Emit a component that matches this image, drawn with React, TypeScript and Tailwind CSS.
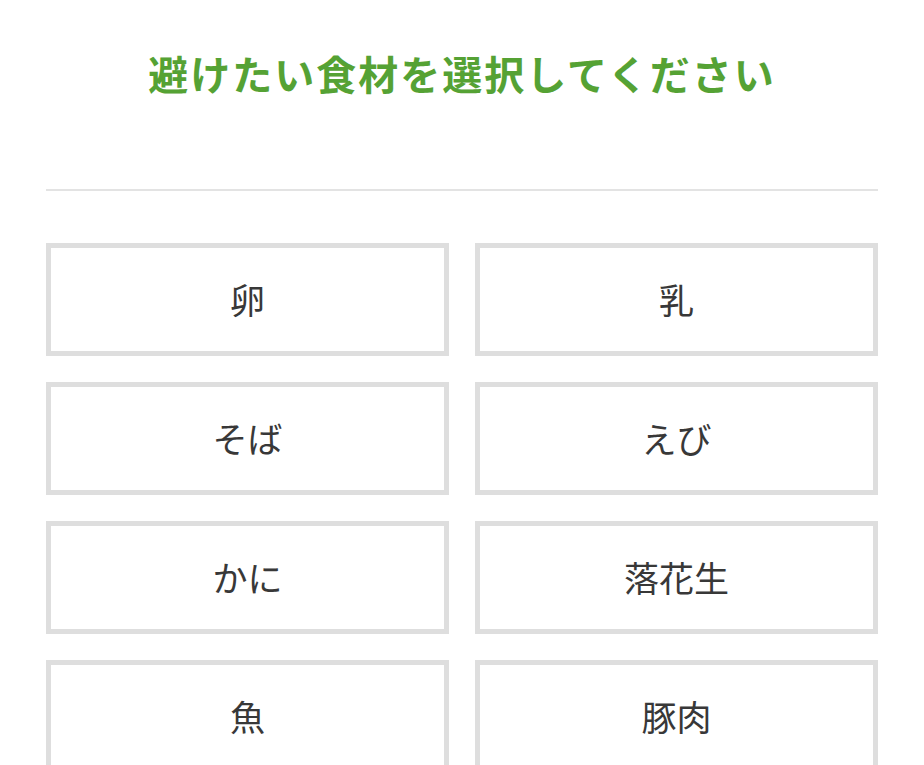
export default function App() {
  const items = ['卵', '乳', 'そば', 'えび', 'かに', '落花生', '魚', '豚肉'];

  return (
    <div className="min-h-screen bg-white font-['Noto_Sans_CJK_JP',sans-serif]">
      <div className="mx-[46px]">
        <h1 className="pt-[48px] text-center text-[40px] font-bold leading-[50px] tracking-[0.05em] text-[#55a234]">
          避けたい食材を選択してください
        </h1>
        <div className="mt-[91px] h-[2px] bg-[#e3e3e3]"></div>
        <div className="mt-[52px] grid grid-cols-2 gap-[26px]">
          {items.map((item) => (
            <button
              key={item}
              className="flex h-[113px] items-center justify-center border-[5px] border-[#dedede] bg-white text-[35px] text-[#383838]"
            >
              {item}
            </button>
          ))}
        </div>
      </div>
    </div>
  );
}
